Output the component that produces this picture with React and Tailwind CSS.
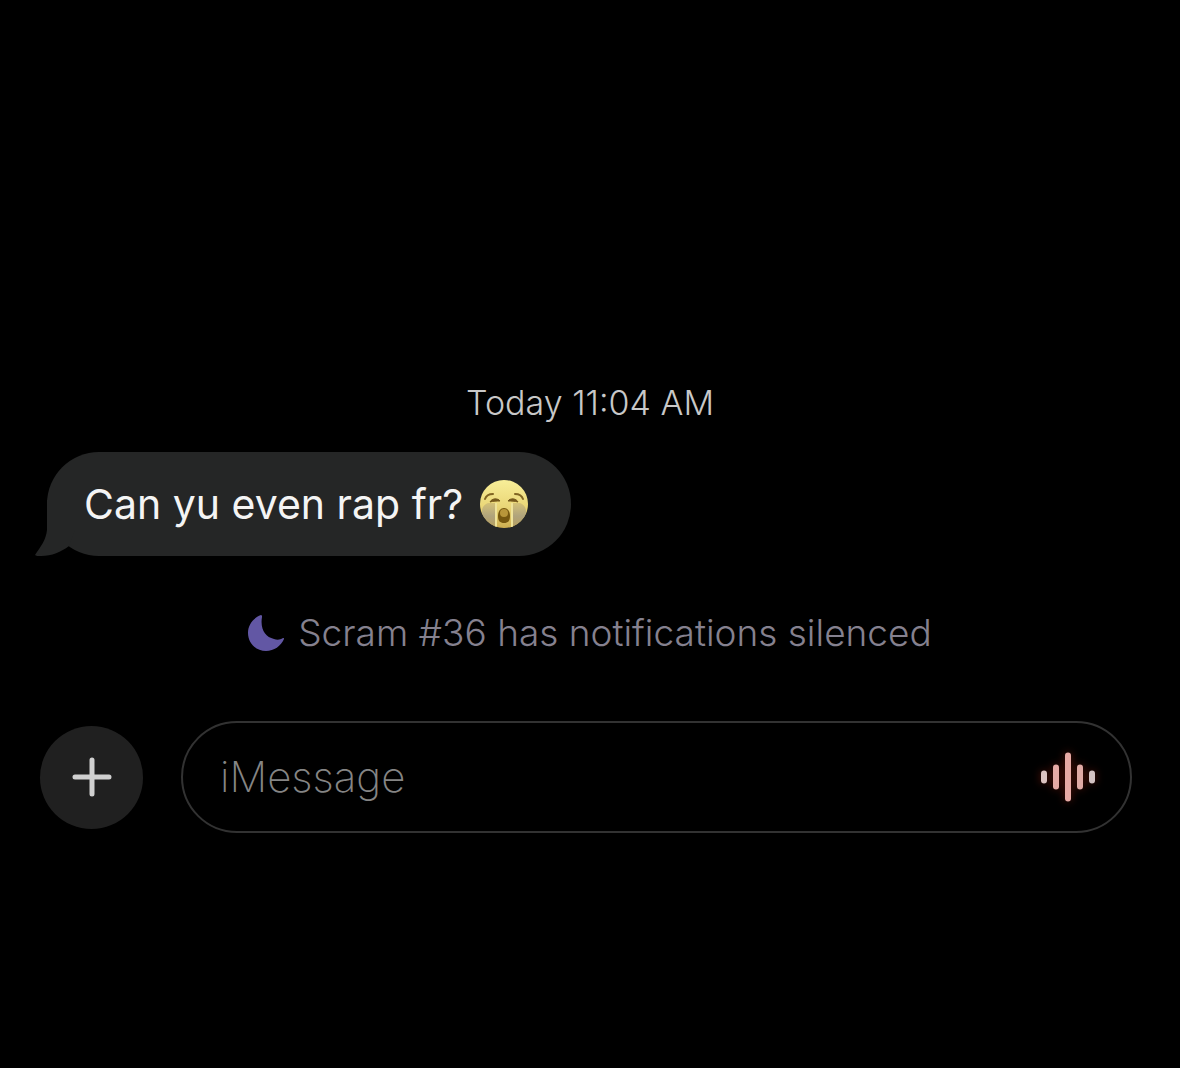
import React, { useState } from 'react';

const bars = [
  { x: 1, height: 13, fill: '#dcc3c1' },
  { x: 13, height: 25, fill: '#e5aaa5' },
  { x: 25, height: 49, fill: '#e8aaa5' },
  { x: 37, height: 25, fill: '#e0aaa5' },
  { x: 49, height: 13, fill: '#d3c3c3' }
];

function CryingFace() {
  return (
    <svg role="img" aria-label="Loudly crying face" viewBox="0 0 50 50" className="size-[50px] shrink-0">
      <defs>
        <linearGradient id="face" x1="0" y1="0" x2="0" y2="1">
          <stop offset="0" stopColor="#f8ee98" />
          <stop offset="0.55" stopColor="#ead778" />
          <stop offset="1" stopColor="#cdae50" />
        </linearGradient>
        <linearGradient id="tears" x1="0" y1="0" x2="0" y2="1">
          <stop offset="0" stopColor="#d0bd76" />
          <stop offset="0.5" stopColor="#a89e80" />
          <stop offset="1" stopColor="#b39c5e" />
        </linearGradient>
        <clipPath id="head">
          <circle cx="25" cy="25" r="24" />
        </clipPath>
      </defs>
      <circle cx="25" cy="25" r="24" fill="url(#face)" />
      <g clipPath="url(#head)">
        <path d="M9 24h8v26h-7C5 44 3 38 3 32c0-4 3-7 6-8zM41 24h-8v26h7c5-6 7-12 7-18 0-4-3-7-6-8z" fill="url(#tears)" opacity="0.85" />
        <path d="M17 24v25M33 24v25" stroke="#efe39a" strokeWidth="2" />
      </g>
      <path d="M6 20c1-3 4-5 8-5M44 20c-1-3-4-5-8-5" fill="none" stroke="#806522" strokeWidth="2" strokeLinecap="round" />
      <path d="M11 23c2-4 8-4 10-1-3 0-7 0-10 1zM29 22c2-3 8-3 10 1-3-1-7-1-10-1z" fill="#75591c" stroke="#75591c" strokeWidth="1" strokeLinejoin="round" />
      <path d="M25 29c4 0 6 4 6 8 0 5-2 7-6 7s-6-2-6-7c0-4 2-8 6-8z" fill="#75570f" />
      <ellipse cx="25" cy="34" rx="4" ry="4" fill="#b8963a" />
    </svg>
  );
}

function MessageBubble({ children }) {
  return (
    <div className="relative ml-[47px] flex min-h-[104px] w-fit items-center gap-4 rounded-[52px] bg-[#252626] pr-[42px] pl-[37px] text-[41px] leading-[52px] text-[#f4f4f4]">
      <svg aria-hidden="true" viewBox="0 0 40 56" className="absolute bottom-0 -left-3 h-14 w-10">
        <path d="M12 0V30C11 40 6 46 0 55c1 1 3 1 6 1 11 0 20-4 28-10l6-16V0z" fill="#252626" />
      </svg>
      {children}
    </div>
  );
}

export default function App() {
  const [message, setMessage] = useState('');

  return (
    <main className="flex min-h-screen flex-col bg-black pt-[383px] font-['Inter',sans-serif]">
      <time className="text-center text-[34px] leading-[40px] font-light text-[#c8c8c8]">Today 11:04 AM</time>

      <div className="mt-[29px]">
        <MessageBubble>
          <p className="relative">Can yu even rap fr?</p>
          <CryingFace />
        </MessageBubble>
      </div>

      <div className="mt-[57px] flex items-center justify-center gap-[14px]">
        <svg aria-hidden="true" viewBox="0 0 36 36" className="size-9 shrink-0">
          <path d="M13 0C5 3 0 10 0 18c0 10 8 18 18 18 8 0 15-5 18-12 0-1 0-1-1-1-3 2-6 2-9 1C17 22 12 14 14 2c0-1 0-2-1-2z" fill="#6257a4" />
        </svg>
        <p className="text-[37px] leading-[40px] font-light text-[#85818f]">Scram #36 has notifications silenced</p>
      </div>

      <form className="mt-[68px] flex items-center gap-[38px] pr-12 pl-10" onSubmit={e => e.preventDefault()}>
        <button type="button" aria-label="Add attachment" className="flex size-[103px] shrink-0 items-center justify-center rounded-full bg-[#202020]">
          <svg aria-hidden="true" viewBox="0 0 42 42" className="size-[42px]">
            <path d="M4 21h34M21 4v34" fill="none" stroke="#d0d0d0" strokeWidth="5" strokeLinecap="round" />
          </svg>
        </button>
        <div className="flex h-[112px] min-w-0 flex-1 items-center rounded-full border-2 border-[#323232] pr-8 pl-[37px]">
          <input
            aria-label="iMessage"
            placeholder="iMessage"
            value={message}
            onChange={e => setMessage(e.target.value)}
            className="min-w-0 flex-1 bg-transparent text-[42px] leading-[52px] font-extralight text-white outline-none placeholder:text-[#858585]"
          />
          <button type="button" aria-label="Record audio" className="shrink-0">
            <svg aria-hidden="true" viewBox="0 0 58 50" className="h-[50px] w-[58px] drop-shadow-[0_0_4px_#5a1208]">
              {bars.map(bar => (
                <rect key={bar.x} x={bar.x} y={25 - bar.height / 2} width="6" height={bar.height} rx="3" fill={bar.fill} />
              ))}
            </svg>
          </button>
        </div>
      </form>
    </main>
  );
}
